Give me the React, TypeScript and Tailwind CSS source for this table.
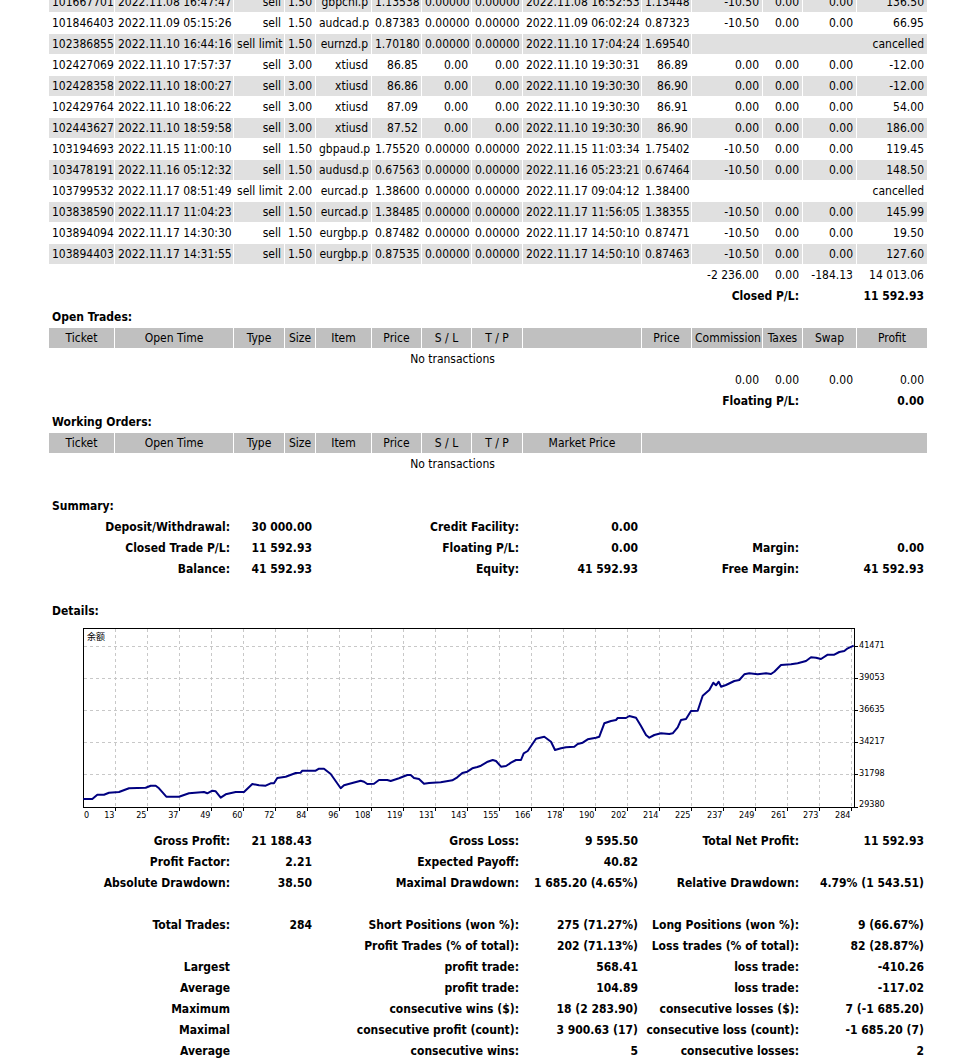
import React from "react";

const cols = [65, 118, 50, 30, 55, 49, 49, 50, 118, 49, 70, 39, 53, 70];
const leftCols = [0, 1, 8];

const trades = [
  ["101667701", "2022.11.08 16:47:47", "sell", "1.50", "gbpchf.p", "1.13538", "0.00000", "0.00000", "2022.11.08 16:52:53", "1.13448", "-10.50", "0.00", "0.00", "136.50"],
  ["101846403", "2022.11.09 05:15:26", "sell", "1.50", "audcad.p", "0.87383", "0.00000", "0.00000", "2022.11.09 06:02:24", "0.87323", "-10.50", "0.00", "0.00", "66.95"],
  ["102386855", "2022.11.10 16:44:16", "sell limit", "1.50", "eurnzd.p", "1.70180", "0.00000", "0.00000", "2022.11.10 17:04:24", "1.69540", "cancelled"],
  ["102427069", "2022.11.10 17:57:37", "sell", "3.00", "xtiusd", "86.85", "0.00", "0.00", "2022.11.10 19:30:31", "86.89", "0.00", "0.00", "0.00", "-12.00"],
  ["102428358", "2022.11.10 18:00:27", "sell", "3.00", "xtiusd", "86.86", "0.00", "0.00", "2022.11.10 19:30:30", "86.90", "0.00", "0.00", "0.00", "-12.00"],
  ["102429764", "2022.11.10 18:06:22", "sell", "3.00", "xtiusd", "87.09", "0.00", "0.00", "2022.11.10 19:30:30", "86.91", "0.00", "0.00", "0.00", "54.00"],
  ["102443627", "2022.11.10 18:59:58", "sell", "3.00", "xtiusd", "87.52", "0.00", "0.00", "2022.11.10 19:30:30", "86.90", "0.00", "0.00", "0.00", "186.00"],
  ["103194693", "2022.11.15 11:00:10", "sell", "1.50", "gbpaud.p", "1.75520", "0.00000", "0.00000", "2022.11.15 11:03:34", "1.75402", "-10.50", "0.00", "0.00", "119.45"],
  ["103478191", "2022.11.16 05:12:32", "sell", "1.50", "audusd.p", "0.67563", "0.00000", "0.00000", "2022.11.16 05:23:21", "0.67464", "-10.50", "0.00", "0.00", "148.50"],
  ["103799532", "2022.11.17 08:51:49", "sell limit", "2.00", "eurcad.p", "1.38600", "0.00000", "0.00000", "2022.11.17 09:04:12", "1.38400", "cancelled"],
  ["103838590", "2022.11.17 11:04:23", "sell", "1.50", "eurcad.p", "1.38485", "0.00000", "0.00000", "2022.11.17 11:56:05", "1.38355", "-10.50", "0.00", "0.00", "145.99"],
  ["103894094", "2022.11.17 14:30:30", "sell", "1.50", "eurgbp.p", "0.87482", "0.00000", "0.00000", "2022.11.17 14:50:10", "0.87471", "-10.50", "0.00", "0.00", "19.50"],
  ["103894403", "2022.11.17 14:31:55", "sell", "1.50", "eurgbp.p", "0.87535", "0.00000", "0.00000", "2022.11.17 14:50:10", "0.87463", "-10.50", "0.00", "0.00", "127.60"],
];

const openHead = ["Ticket", "Open Time", "Type", "Size", "Item", "Price", "S / L", "T / P", "", "Price", "Commission", "Taxes", "Swap", "Profit"];
const orderHead = ["Ticket", "Open Time", "Type", "Size", "Item", "Price", "S / L", "T / P", "Market Price"];

const stats1 = [
  ["Gross Profit:", "21 188.43", "Gross Loss:", "9 595.50", "Total Net Profit:", "11 592.93"],
  ["Profit Factor:", "2.21", "Expected Payoff:", "40.82", "", ""],
  ["Absolute Drawdown:", "38.50", "Maximal Drawdown:", "1 685.20 (4.65%)", "Relative Drawdown:", "4.79% (1 543.51)"],
];

const stats2 = [
  ["Total Trades:", "284", "Short Positions (won %):", "275 (71.27%)", "Long Positions (won %):", "9 (66.67%)"],
  ["", "", "Profit Trades (% of total):", "202 (71.13%)", "Loss trades (% of total):", "82 (28.87%)"],
  ["Largest", "", "profit trade:", "568.41", "loss trade:", "-410.26"],
  ["Average", "", "profit trade:", "104.89", "loss trade:", "-117.02"],
  ["Maximum", "", "consecutive wins ($):", "18 (2 283.90)", "consecutive losses ($):", "7 (-1 685.20)"],
  ["Maximal", "", "consecutive profit (count):", "3 900.63 (17)", "consecutive loss (count):", "-1 685.20 (7)"],
  ["Average", "", "consecutive wins:", "5", "consecutive losses:", "2"],
];

const summary = [
  ["Deposit/Withdrawal:", "30 000.00", "Credit Facility:", "0.00", "", ""],
  ["Closed Trade P/L:", "11 592.93", "Floating P/L:", "0.00", "Margin:", "0.00"],
  ["Balance:", "41 592.93", "Equity:", "41 592.93", "Free Margin:", "41 592.93"],
];

// balance curve, traced in page coordinates
const curve = [
  [82.3, 799], [91.3, 799], [96.3, 794.7], [103, 794.7], [108, 792.7], [118, 792], [128, 788.3], [144.7, 787.7],
  [149.7, 785.7], [154.7, 785.7], [158, 788.3], [165.3, 796.7], [178, 796.7], [188, 793.3], [203, 792], [206.3, 793.3],
  [211.3, 790.7], [214.7, 791.3], [219.7, 797.7], [224.7, 794.3], [234.7, 792], [243, 792], [251.3, 784], [258, 785.3],
  [264.7, 785.7], [269.7, 783.3], [273, 783.3], [276.3, 778], [284.7, 776.7], [294.7, 773], [299.7, 772.7], [301.3, 770.7],
  [314.7, 770.7], [318, 768.7], [323, 768.7], [329.7, 774], [339.7, 788.3], [343, 785.3], [351.3, 783], [359.7, 780.7],
  [363, 781.7], [366.3, 784], [373, 783.7], [378, 780], [386.3, 780], [389.7, 781], [398, 778.3], [406.3, 775],
  [409.7, 775], [413, 778], [418, 779], [423, 783.7], [428, 783], [439.7, 782.3], [451.3, 780.3], [456.3, 777.3],
  [461.3, 773], [466.3, 771.7], [471.3, 768.3], [476.3, 767], [480, 765.7], [486.7, 761.7], [491.7, 760], [495, 761],
  [500, 766.7], [505, 766], [510, 762.7], [515, 760], [520, 760], [522.7, 753.3], [526.7, 751], [535, 738.7],
  [543.3, 736.7], [550, 741.7], [554, 750], [560, 748.3], [565, 747.3], [573.3, 746.7], [576.7, 744], [581.7, 742.7],
  [586.7, 739.3], [595, 737.7], [598.3, 736.7], [603.3, 723.3], [610, 721], [615, 720], [616.7, 718], [625, 718],
  [628.3, 716], [635, 717.7], [640, 726], [645, 735], [648.3, 737.7], [653.3, 735], [660, 733.3], [668.3, 734],
  [671.7, 733.3], [676.7, 727.3], [680, 720], [685, 719], [690, 711], [696.7, 710.7], [701.7, 695.7], [708.3, 690],
  [712.3, 682.7], [715, 685.3], [717.7, 681.7], [720, 686.7], [725, 685], [733.3, 681], [738.3, 680], [743.3, 674.3],
  [748.3, 673.3], [756.7, 674.3], [765, 673.3], [770, 674], [773.3, 671.7], [780, 665], [790, 664.3], [796.7, 663.3],
  [805, 661], [810, 657.3], [815, 657.7], [820, 659], [826.7, 654.7], [833.3, 654.7], [838.3, 652], [843.3, 651],
  [846.7, 648.3], [852.7, 645.7],
];

const xLabels = ["13", "25", "37", "49", "60", "72", "84", "96", "108", "119", "131", "143", "155", "166", "178", "190", "202", "214", "225", "237", "249", "261", "273", "284"];
const yLabels = ["41471", "39053", "36635", "34217", "31798"];

const td = "h-[20px] px-[3px] py-0 whitespace-nowrap";
const chartFont = "DejaVu Sans Condensed, Liberation Sans, sans-serif";

function BalanceChart() {
  return (
    <svg viewBox="48 622 880 208" width={880} height={208} className="block">
      <rect x={82.5} y={628.5} width={771} height={179} fill="#fff" stroke="#000" />
      {xLabels.map((l, i) => (
        <g key={i}>
          <line x1={114.5 + i * 32} y1={629} x2={114.5 + i * 32} y2={807} stroke="#c8c8c8" strokeDasharray="3 3" />
          <line x1={114.5 + i * 32} y1={807} x2={114.5 + i * 32} y2={811} stroke="#000" />
          <text x={113.5 + i * 32} y={818} textAnchor="end" fontSize="9" fill="#000" fontFamily={chartFont}>
            {l}
          </text>
        </g>
      ))}
      <text x={83} y={818} fontSize="9" fill="#000" fontFamily={chartFont}>0</text>
      {yLabels.map((l, i) => (
        <g key={l}>
          <line x1={83} y1={646.5 + i * 32} x2={853} y2={646.5 + i * 32} stroke="#c8c8c8" strokeDasharray="3 3" />
          <line x1={853} y1={646.5 + i * 32} x2={857} y2={646.5 + i * 32} stroke="#000" />
          <text x={858} y={647.5 + i * 32} fontSize="9" fill="#000" fontFamily={chartFont}>
            {l}
          </text>
        </g>
      ))}
      <line x1={853} y1={807.5} x2={857} y2={807.5} stroke="#000" />
      <text x={858} y={807} fontSize="9" fill="#000" fontFamily={chartFont}>29380</text>
      <text x={86} y={640} fontSize="9" fill="#000" fontFamily="Noto Sans CJK SC, sans-serif">余额</text>
      <polyline points={curve.map((p) => p.join(",")).join(" ")} fill="none" stroke="#000080" strokeWidth={2} strokeLinejoin="round" />
    </svg>
  );
}

function StatRow({ r }: { r: string[] }) {
  return (
    <tr>
      <td colSpan={2} className={`${td} text-right font-bold`}>{r[0]}</td>
      <td colSpan={2} className={`${td} text-right font-bold`}>{r[1]}</td>
      <td colSpan={4} className={`${td} text-right font-bold`}>{r[2]}</td>
      <td className={`${td} text-right font-bold`}>{r[3]}</td>
      <td colSpan={3} className={`${td} text-right font-bold`}>{r[4]}</td>
      <td colSpan={2} className={`${td} text-right font-bold`}>{r[5]}</td>
    </tr>
  );
}

function Blank() {
  return (
    <tr>
      <td colSpan={14} className={td}></td>
    </tr>
  );
}

function Title({ text }: { text: string }) {
  return (
    <tr>
      <td colSpan={14} className={`${td} text-left font-bold`}>{text}</td>
    </tr>
  );
}

export default function App() {
  return (
    <div className="h-[1062px] overflow-hidden bg-white text-black">
      <table className="-mt-[9px] ml-[48px] w-[880px] table-fixed border-separate border-spacing-px text-[12px] font-['DejaVu_Sans_Condensed','Liberation_Sans',sans-serif]">
        <colgroup>
          {cols.map((w, i) => (
            <col key={i} style={{ width: w }} />
          ))}
        </colgroup>
        <tbody>
          {trades.map((t, i) => (
            <tr key={t[0]}>
              {t.map((v, j) =>
                v === "cancelled" ? (
                  <td key={j} colSpan={4} className={`${td} text-right ${i % 2 === 0 ? "bg-[#e0e0e0]" : ""}`}>cancelled</td>
                ) : (
                  <td key={j} className={`${td} ${leftCols.includes(j) ? "text-left" : "text-right"} ${i % 2 === 0 ? "bg-[#e0e0e0]" : ""}`}>
                    {v}
                  </td>
                )
              )}
            </tr>
          ))}
          <tr>
            <td colSpan={10} className={td}></td>
            <td className={`${td} text-right`}>-2 236.00</td>
            <td className={`${td} text-right`}>0.00</td>
            <td className={`${td} text-right`}>-184.13</td>
            <td className={`${td} text-right`}>14 013.06</td>
          </tr>
          <tr>
            <td colSpan={10} className={td}></td>
            <td colSpan={2} className={`${td} text-right font-bold`}>Closed P/L:</td>
            <td colSpan={2} className={`${td} text-right font-bold`}>11 592.93</td>
          </tr>
          <Title text="Open Trades:" />
          <tr>
            {openHead.map((h, i) => (
              <td key={i} className={`${td} text-center bg-[#c0c0c0]`}>{h}</td>
            ))}
          </tr>
          <tr>
            <td colSpan={13} className={`${td} text-center`}>No transactions</td>
            <td className={td}></td>
          </tr>
          <tr>
            <td colSpan={10} className={td}></td>
            <td className={`${td} text-right`}>0.00</td>
            <td className={`${td} text-right`}>0.00</td>
            <td className={`${td} text-right`}>0.00</td>
            <td className={`${td} text-right`}>0.00</td>
          </tr>
          <tr>
            <td colSpan={10} className={td}></td>
            <td colSpan={2} className={`${td} text-right font-bold`}>Floating P/L:</td>
            <td colSpan={2} className={`${td} text-right font-bold`}>0.00</td>
          </tr>
          <Title text="Working Orders:" />
          <tr>
            {orderHead.map((h, i) => (
              <td key={i} className={`${td} text-center bg-[#c0c0c0]`}>{h}</td>
            ))}
            <td colSpan={5} className={`${td} bg-[#c0c0c0]`}></td>
          </tr>
          <tr>
            <td colSpan={13} className={`${td} text-center`}>No transactions</td>
            <td className={td}></td>
          </tr>
          <Blank />
          <Title text="Summary:" />
          {summary.map((r, i) => (
            <StatRow key={i} r={r} />
          ))}
          <Blank />
          <Title text="Details:" />
          <tr>
            <td colSpan={14} className="h-[208px] p-0">
              <BalanceChart />
            </td>
          </tr>
          {stats1.map((r, i) => (
            <StatRow key={i} r={r} />
          ))}
          <Blank />
          {stats2.map((r, i) => (
            <StatRow key={i} r={r} />
          ))}
        </tbody>
      </table>
    </div>
  );
}
